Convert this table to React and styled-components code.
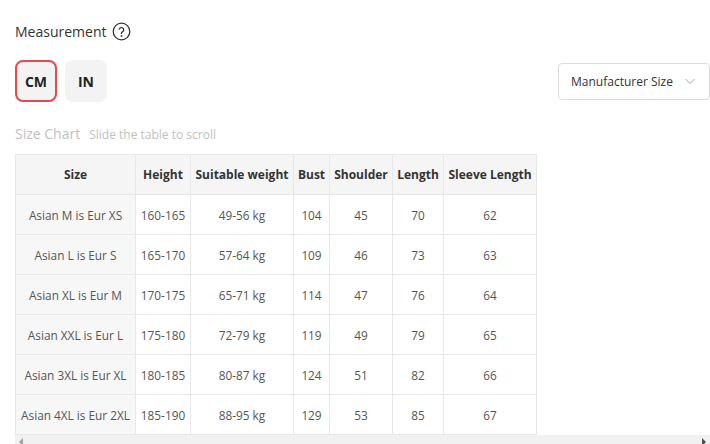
import React, { useState } from "react";
import styled, { createGlobalStyle } from "styled-components";

const GlobalStyle = createGlobalStyle`
  html, body {
    margin: 0;
    padding: 0;
    background: #fff;
    font-family: "Open Sans", "Noto Sans", sans-serif;
  }
`;

const Page = styled.div`
  width: 695px;
  padding: 19px 1px 0 15px;
  height: 425px;
  overflow: hidden;
`;

const TitleRow = styled.div`
  display: flex;
  align-items: center;
  gap: 6px;
  font-size: 14px;
  color: #333;
  height: 24px;
`;

const HelpIcon = styled.span`
  display: inline-flex;
  width: 19px;
  height: 19px;
  color: #333;
`;

const ControlsRow = styled.div`
  display: flex;
  align-items: center;
  justify-content: space-between;
  margin-top: 17px;
`;

const Units = styled.div`
  display: flex;
  gap: 8px;
`;

const UnitButton = styled.button`
  width: 42px;
  height: 42px;
  box-sizing: border-box;
  border-radius: 8px;
  border: 2px solid ${(p) => (p.$active ? "#e5484d" : "transparent")};
  background: #f3f3f3;
  font-family: "Open Sans", sans-serif;
  font-weight: 700;
  font-size: 14px;
  color: #222;
  padding: 0;
  cursor: pointer;
`;

const Select = styled.div`
  display: flex;
  align-items: center;
  justify-content: space-between;
  box-sizing: border-box;
  width: 152px;
  height: 37px;
  padding: 0 13px 0 12px;
  border: 1px solid #dcdcdc;
  border-radius: 4px;
  font-size: 12px;
  color: #333;
`;

const ChartLabel = styled.div`
  display: flex;
  align-items: baseline;
  gap: 9px;
  margin-top: 22px;
  color: #c0c0c0;
  font-size: 14px;
  span {
    font-size: 12px;
  }
`;

const TableWrap = styled.div`
  margin-top: 11px;
`;

const Table = styled.table`
  border-collapse: collapse;
  table-layout: fixed;
  width: 522px;
  font-size: 11.8px;
  color: #555;
`;

const Th = styled.th`
  height: 39px;
  padding: 0;
  background: #f5f5f5;
  color: #333;
  font-weight: 700;
  font-size: 12px;
  border: 1px solid #e8e8e8;
  text-align: center;
  white-space: nowrap;
`;

const Td = styled.td`
  height: 39px;
  padding: 0;
  text-align: center;
  white-space: nowrap;
  border: 1px solid #e8e8e8;
  background: ${(p) => (p.$first ? "#f7f7f7" : "#fff")};
`;

const ScrollBar = styled.div`
  display: flex;
  justify-content: space-between;
  align-items: center;
  height: 15px;
  background: #f1f1f1;
  padding: 0 4px;
`;

const Arrow = styled.span`
  width: 0;
  height: 0;
  border-top: 4px solid transparent;
  border-bottom: 4px solid transparent;
  ${(p) =>
    p.$dir === "left"
      ? "border-right: 4px solid #a3a3a3;"
      : "border-left: 4px solid #505050;"}
  margin-top: -2px;
`;

const columns = [
  ["Size", 120],
  ["Height", 55],
  ["Suitable weight", 103],
  ["Bust", 36],
  ["Shoulder", 63],
  ["Length", 51],
  ["Sleeve Length", 93],
];

const rows = [
  ["Asian M is Eur XS", "160-165", "49-56 kg", "104", "45", "70", "62"],
  ["Asian L is Eur S", "165-170", "57-64 kg", "109", "46", "73", "63"],
  ["Asian XL is Eur M", "170-175", "65-71 kg", "114", "47", "76", "64"],
  ["Asian XXL is Eur L", "175-180", "72-79 kg", "119", "49", "79", "65"],
  ["Asian 3XL is Eur XL", "180-185", "80-87 kg", "124", "51", "82", "66"],
  ["Asian 4XL is Eur 2XL", "185-190", "88-95 kg", "129", "53", "85", "67"],
];

export default function App() {
  const [unit, setUnit] = useState("CM");
  return (
    <>
      <GlobalStyle />
      <Page>
        <TitleRow>
          Measurement
          <HelpIcon>
            <svg width="19" height="19" viewBox="0 0 24 24" fill="none" stroke="currentColor" strokeWidth="1.6" strokeLinecap="round" strokeLinejoin="round">
              <circle cx="12" cy="12" r="10.5" />
              <path d="M9.1 9a3 3 0 0 1 5.8 1c0 2-3 2.6-3 4.4" />
              <circle cx="12" cy="17.6" r="0.4" fill="currentColor" />
            </svg>
          </HelpIcon>
        </TitleRow>
        <ControlsRow>
          <Units>
            {["CM", "IN"].map((u) => (
              <UnitButton key={u} $active={unit === u} onClick={() => setUnit(u)}>
                {u}
              </UnitButton>
            ))}
          </Units>
          <Select>
            Manufacturer Size
            <svg width="12" height="12" viewBox="0 0 24 24" fill="none" stroke="#999" strokeWidth="1.8">
              <path d="M3 8l9 9 9-9" />
            </svg>
          </Select>
        </ControlsRow>
        <ChartLabel>
          Size Chart<span>Slide the table to scroll</span>
        </ChartLabel>
        <TableWrap>
          <Table>
            <colgroup>
              {columns.map(([name, w]) => (
                <col key={name} style={{ width: w }} />
              ))}
            </colgroup>
            <thead>
              <tr>
                {columns.map(([name]) => (
                  <Th key={name}>{name}</Th>
                ))}
              </tr>
            </thead>
            <tbody>
              {rows.map((r) => (
                <tr key={r[0]}>
                  {r.map((c, i) => (
                    <Td key={i} $first={i === 0}>
                      {c}
                    </Td>
                  ))}
                </tr>
              ))}
            </tbody>
          </Table>
          <ScrollBar>
            <Arrow $dir="left" />
            <Arrow $dir="right" />
          </ScrollBar>
        </TableWrap>
      </Page>
    </>
  );
}
